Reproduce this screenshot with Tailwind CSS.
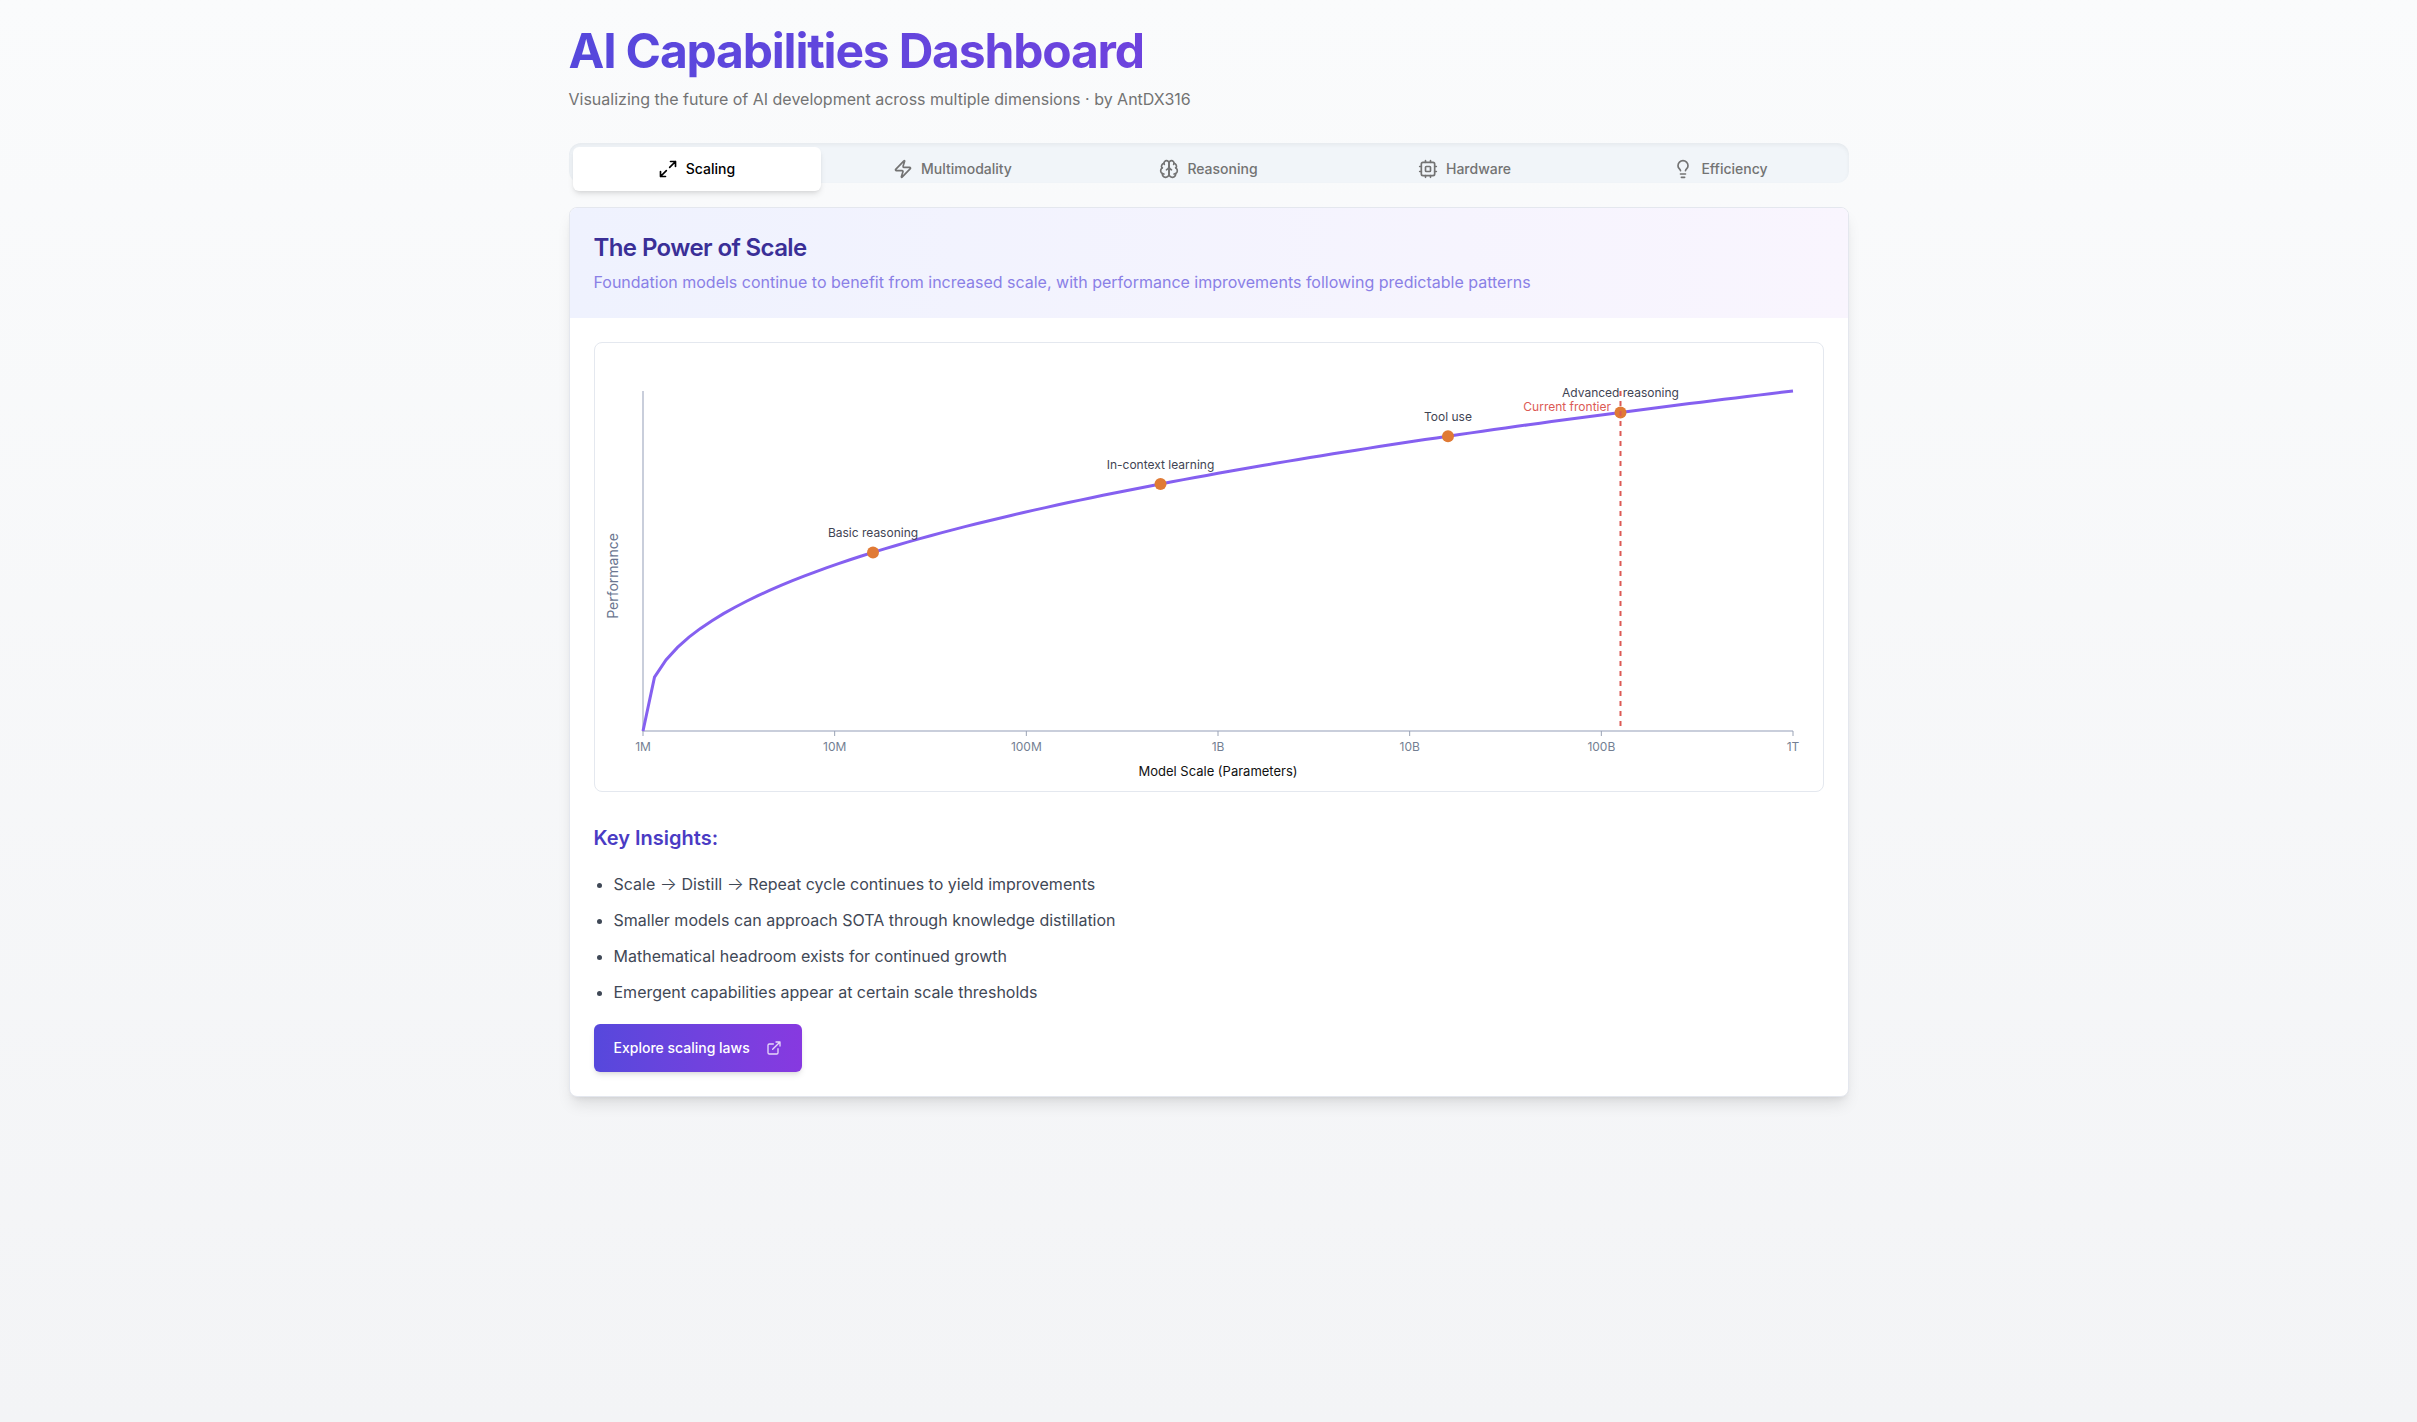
<!DOCTYPE html>
<html lang="en">
<head>
<meta charset="utf-8">
<meta name="viewport" content="width=device-width, initial-scale=1">
<title>AI Capabilities Dashboard</title>
<script src="https://cdn.jsdelivr.net/npm/@tailwindcss/browser@4"></script>
</head>
<body class="min-h-screen bg-linear-to-b from-[#fafbfc] to-[#f3f4f6] font-['Inter',sans-serif] text-black">
<main class="mx-auto max-w-[1280px] py-[21px]">
  <header class="mb-8">
    <h1 class="bg-linear-to-r from-[#5648dc] to-[#8739e0] bg-clip-text text-5xl leading-[60px] font-bold tracking-tight text-transparent">AI Capabilities Dashboard</h1>
    <p class="mt-1.5 text-base text-[#737373]">Visualizing the future of AI development across multiple dimensions · by AntDX316</p>
  </header>

  <div role="tablist" aria-label="Capability" class="mb-6 grid h-10 grid-cols-5 gap-2 rounded-xl bg-[#f1f5f9] p-1 text-sm font-medium text-[#737373] inset-shadow-[0_2px_4px_rgb(0_0_0/0.05)]">
    <button role="tab" aria-selected="true" class="flex h-11 items-center justify-center gap-2 rounded-md bg-white text-black shadow-md">
      <svg class="size-5" viewBox="0 0 24 24" fill="none" stroke="currentColor" stroke-width="2" stroke-linecap="round" stroke-linejoin="round" aria-hidden="true"><path d="M15 3h6v6M9 21H3v-6M21 3l-7 7M3 21l7-7"/></svg>
      Scaling
    </button>
    <button role="tab" aria-selected="false" class="flex h-11 items-center justify-center gap-2 rounded-md">
      <svg class="size-5" viewBox="0 0 24 24" fill="none" stroke="currentColor" stroke-width="2" stroke-linecap="round" stroke-linejoin="round" aria-hidden="true"><path d="M4 14a1 1 0 0 1-.78-1.63l9.9-10.2a.5.5 0 0 1 .86.46l-1.92 6.02A1 1 0 0 0 13 10h7a1 1 0 0 1 .78 1.63l-9.9 10.2a.5.5 0 0 1-.86-.46l1.92-6.02A1 1 0 0 0 11 14z"/></svg>
      Multimodality
    </button>
    <button role="tab" aria-selected="false" class="flex h-11 items-center justify-center gap-2 rounded-md">
      <svg class="size-5" viewBox="0 0 24 24" fill="none" stroke="currentColor" stroke-width="2" stroke-linecap="round" stroke-linejoin="round" aria-hidden="true"><path d="M12 5a3 3 0 1 0-5.997.125 4 4 0 0 0-2.526 5.77 4 4 0 0 0 .556 6.588A4 4 0 1 0 12 18Z"/><path d="M12 5a3 3 0 1 1 5.997.125 4 4 0 0 1 2.526 5.77 4 4 0 0 1-.556 6.588A4 4 0 1 1 12 18Z"/><path d="M15 13a4.5 4.5 0 0 1-3-4 4.5 4.5 0 0 1-3 4"/><path d="M17.599 6.5a3 3 0 0 0 .399-1.375M6.003 5.125A3 3 0 0 0 6.401 6.5M3.477 10.896a4 4 0 0 1 .585-.396M19.938 10.5a4 4 0 0 1 .585.396M6 18a4 4 0 0 1-1.967-.516M19.967 17.484A4 4 0 0 1 18 18"/></svg>
      Reasoning
    </button>
    <button role="tab" aria-selected="false" class="flex h-11 items-center justify-center gap-2 rounded-md">
      <svg class="size-5" viewBox="0 0 24 24" fill="none" stroke="currentColor" stroke-width="2" stroke-linecap="round" stroke-linejoin="round" aria-hidden="true"><rect width="16" height="16" x="4" y="4" rx="2"/><rect width="6" height="6" x="9" y="9" rx="1"/><path d="M15 2v2M15 20v2M2 15h2M2 9h2M20 15h2M20 9h2M9 2v2M9 20v2"/></svg>
      Hardware
    </button>
    <button role="tab" aria-selected="false" class="flex h-11 items-center justify-center gap-2 rounded-md">
      <svg class="size-5" viewBox="0 0 24 24" fill="none" stroke="currentColor" stroke-width="2" stroke-linecap="round" stroke-linejoin="round" aria-hidden="true"><path d="M15 14c.2-1 .7-1.7 1.5-2.5 1-.9 1.5-2.2 1.5-3.5A6 6 0 0 0 6 8c0 1 .2 2.2 1.5 3.5.7.7 1.3 1.5 1.5 2.5"/><path d="M9 18h6M10 22h4"/></svg>
      Efficiency
    </button>
  </div>

  <section class="overflow-hidden rounded-lg border border-[#e4e7ee] bg-white shadow-lg">
    <div class="bg-linear-to-r from-[#eff2fe] to-[#f9f5fe] p-6">
      <h2 class="text-2xl font-semibold tracking-tight text-[#3a2f97]">The Power of Scale</h2>
      <p class="mt-1.5 text-base text-[#8a80e6]">Foundation models continue to benefit from increased scale, with performance improvements following predictable patterns</p>
    </div>
    <div class="p-6">
      <div class="rounded-lg border border-[#e4e8ef]">
        <svg id="chart" class="block h-auto w-full" viewBox="0 0 1228 448" role="img" aria-label="Performance against model scale">
          <g stroke="#c9cedb" stroke-width="2">
            <path d="M48 48V388"/>
            <path d="M47 388H1198"/>
          </g>
          <g id="ticks" class="text-xs" fill="#747f93" text-anchor="middle"></g>
          <text class="text-[13px]" x="623" y="433" text-anchor="middle" fill="#111111">Model Scale (Parameters)</text>
          <text class="text-sm" transform="rotate(-90)" x="-233" y="23" text-anchor="middle" fill="#6b7690">Performance</text>
          <path id="curve" fill="none" stroke="#8560f0" stroke-width="3"/>
          <g id="milestones" class="text-xs" fill="#3f4453" text-anchor="middle"></g>
          <path id="frontier" stroke="#dc5a55" stroke-width="2" stroke-dasharray="5 5"/>
          <text class="text-xs" x="1016" y="68" text-anchor="end" fill="#dc5a55">Current frontier</text>
        </svg>
      </div>

      <h3 class="mt-8 text-xl font-semibold text-[#4a3bc4]">Key Insights:</h3>
      <ul class="my-5 list-disc space-y-3 pl-5 text-base text-[#3f4856]">
        <li>Scale <span class="text-lg leading-none font-light">→</span> Distill <span class="text-lg leading-none font-light">→</span> Repeat cycle continues to yield improvements</li>
        <li>Smaller models can approach SOTA through knowledge distillation</li>
        <li>Mathematical headroom exists for continued growth</li>
        <li>Emergent capabilities appear at certain scale thresholds</li>
      </ul>
      <button class="flex h-12 items-center gap-4 rounded-md bg-linear-to-r from-[#5648dc] to-[#8739e0] px-5 text-sm font-medium text-white shadow-md">
        Explore scaling laws
        <svg class="size-4 opacity-80" viewBox="0 0 24 24" fill="none" stroke="currentColor" stroke-width="2" stroke-linecap="round" stroke-linejoin="round" aria-hidden="true"><path d="M15 3h6v6M10 14 21 3M18 13v6a2 2 0 0 1-2 2H5a2 2 0 0 1-2-2V8a2 2 0 0 1 2-2h6"/></svg>
      </button>
    </div>
  </section>
</main>
<script>
  // Plot area inside the chart's view box
  const left = 48, bottom = 388, width = 1150, height = 340;
  const px = t => left + t * width;
  const py = t => bottom - Math.pow(t, 0.4) * height;

  const points = Array.from({ length: 101 }, (_, i) => px(i / 100).toFixed(2) + ',' + py(i / 100).toFixed(2));
  document.getElementById('curve').setAttribute('d', 'M' + points.join('L'));
  document.getElementById('frontier').setAttribute('d', `M${px(0.85)} 48V${bottom}`);

  document.getElementById('ticks').innerHTML = ['1M', '10M', '100M', '1B', '10B', '100B', '1T'].map((label, i) => {
    const x = px(i / 6);
    return `<path d="M${x} 388v5" stroke="#9aa3b5"/><text x="${x}" y="408">${label}</text>`;
  }).join('');

  document.getElementById('milestones').innerHTML = [
    [0.2, 'Basic reasoning'], [0.45, 'In-context learning'], [0.7, 'Tool use'], [0.85, 'Advanced reasoning']
  ].map(([t, label]) =>
    `<circle cx="${px(t)}" cy="${py(t)}" r="6" fill="#e07a35"/><text x="${px(t)}" y="${py(t) - 15}">${label}</text>`
  ).join('');
</script>
</body>
</html>
